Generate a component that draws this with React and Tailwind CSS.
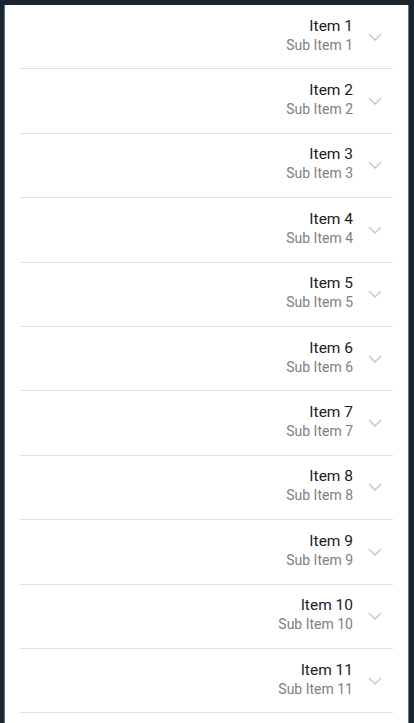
import React from 'react';

const items = Array.from({ length: 11 }, (_, i) => ({
  title: `Item ${i + 1}`,
  sub: `Sub Item ${i + 1}`,
}));

const ChevronDown = () => (
  <svg width="24" height="24" viewBox="0 0 24 24" className="shrink-0 text-[#c4c4c4]">
    <path d="M6 9l6 6 6-6" fill="none" stroke="currentColor" strokeWidth="1.3" />
  </svg>
);

const App = () => {
  return (
    <div className="h-screen overflow-hidden bg-[#1a2530] pt-[5px] pl-[4px] pr-[5px]" style={{ fontFamily: 'Roboto, "Noto Sans", sans-serif' }}>
      <div className="h-full bg-white border-l border-r border-[#4f7d89]">
        <div className="px-[15px]">
          {items.map((item) => (
            <div key={item.title} className="h-[64.4px] border-b border-[#e0e0e0] flex items-center justify-end pr-[6px]">
              <div className="flex flex-col items-end mr-[10px] -mt-[3px]">
                <div className="text-[15.5px] leading-[20px] text-[#212121]">{item.title}</div>
                <div className="text-[14px] leading-[19px] text-[#808080]">{item.sub}</div>
              </div>
              <ChevronDown />
            </div>
          ))}
        </div>
      </div>
    </div>
  );
};

export default App;
